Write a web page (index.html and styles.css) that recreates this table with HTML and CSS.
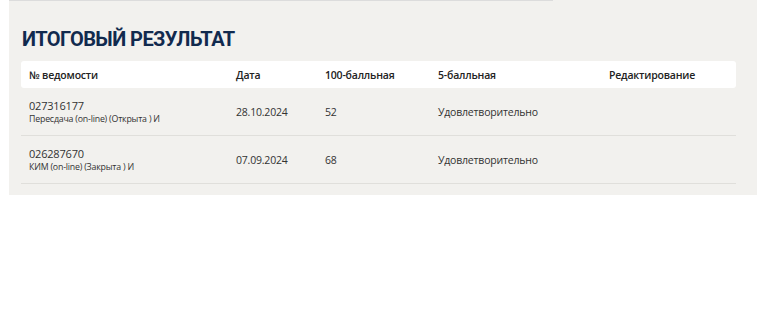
FILE: index.html
```html
<!DOCTYPE html>
<html lang="ru">
<head>
    <meta charset="UTF-8">
    <title>Итоговый результат</title>
    <link rel="stylesheet" href="styles.css">
</head>
<body>

<div class="result-panel">
    <div class="panel-rule"></div>
    <h2 class="panel-title">ИТОГОВЫЙ РЕЗУЛЬТАТ</h2>

    <div class="result-table">
        <div class="result-head">
            <div>№ ведомости</div>
            <div>Дата</div>
            <div>100-балльная</div>
            <div>5-балльная</div>
            <div>Редактирование</div>
        </div>

        <div class="result-row">
            <div>
                <div class="sheet-num">027316177</div>
                <div class="sheet-type">Пересдача (on-line) (Открыта ) И</div>
            </div>
            <div>28.10.2024</div>
            <div>52</div>
            <div>Удовлетворительно</div>
            <div></div>
        </div>

        <div class="result-row">
            <div>
                <div class="sheet-num">026287670</div>
                <div class="sheet-type">КИМ (on-line) (Закрыта ) И</div>
            </div>
            <div>07.09.2024</div>
            <div>68</div>
            <div>Удовлетворительно</div>
            <div></div>
        </div>
    </div>
</div>

</body>
</html>
```

FILE: styles.css
```css
body, html {
    font-family: 'Open Sans', 'Liberation Sans', sans-serif;
    margin: 0;
    padding: 0;
    background: #fff;
    color: #333;
}

.result-panel {
    margin-left: 9px;
    width: 748px;
    box-sizing: border-box;
    padding: 0 21px 11px 12px;
    background: #f2f1ee;
}

.panel-rule {
    height: 1px;
    width: 544px;
    margin-left: -12px;
    background: #dcdcdc;
}

.panel-title {
    margin: 0;
    padding: 26px 0 0 1px;
    height: 34px;
    font-family: 'Roboto', 'DejaVu Sans Condensed', sans-serif;
    font-weight: bold;
    font-size: 20px;
    line-height: 24px;
    letter-spacing: -0.55px;
    color: #112a4e;
}

.result-head,
.result-row {
    display: grid;
    grid-template-columns: 207px 89px 113px 171px 1fr;
    padding-left: 8px;
    font-size: 10.5px;
    letter-spacing: -0.2px;
    align-items: center;
}

.result-head {
    height: 27px;
    background: #fff;
    border-radius: 3px;
    font-weight: 600;
    color: #222;
}

.result-row {
    height: 47px;
    border-bottom: 1px solid #e0dfdb;
}

.sheet-num {
    font-size: 11px;
    line-height: 15px;
}

.sheet-type {
    font-size: 8.8px;
    line-height: 13px;
}
```
